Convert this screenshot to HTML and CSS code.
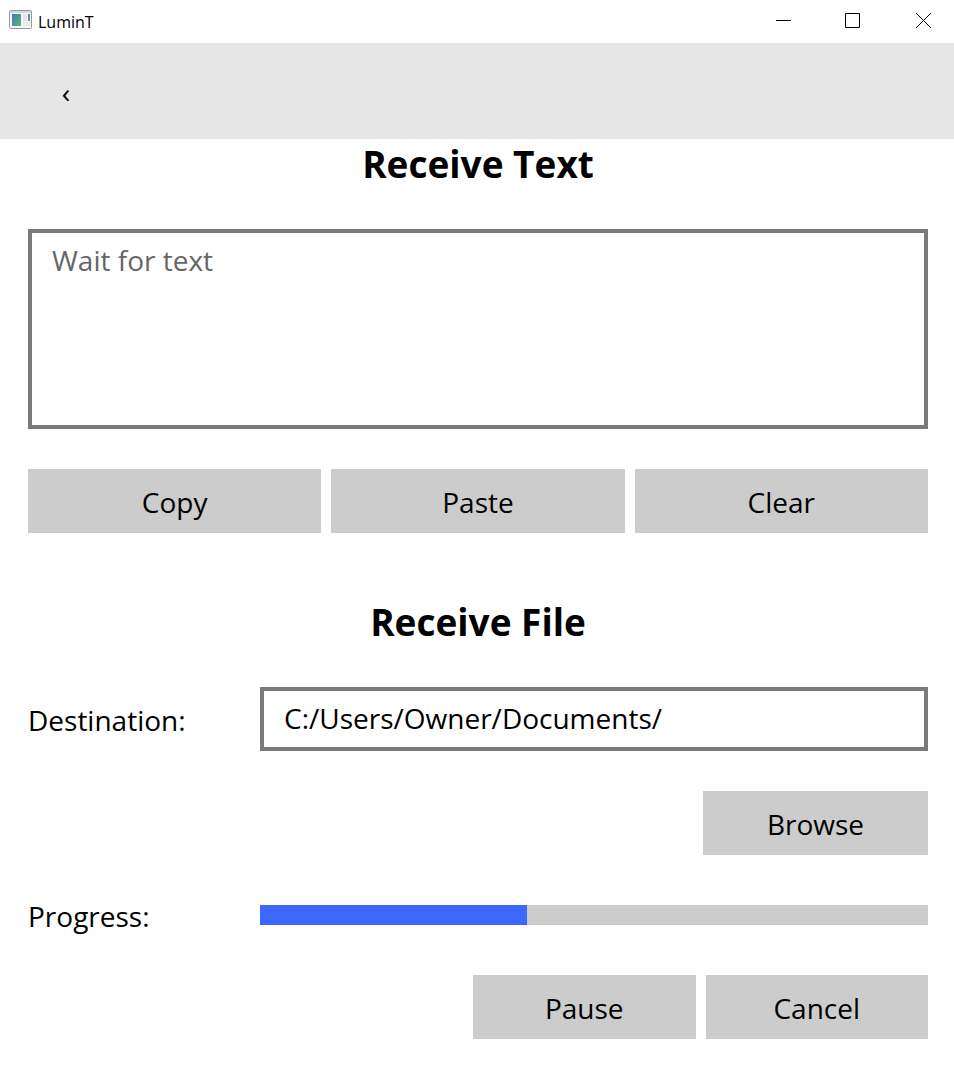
FILE: index.html
```html
<!DOCTYPE html>
<html lang="en">
<head>
<meta charset="utf-8">
<title>LuminT</title>
<link rel="stylesheet" href="styles.css">
</head>
<body>
<header class="titlebar">
  <svg class="app-icon" viewBox="0 0 23 19" aria-hidden="true">
    <defs>
      <linearGradient id="screen" x1="0" y1="0" x2="1" y2="1">
        <stop offset="0" stop-color="#4378ad"/>
        <stop offset="1" stop-color="#5cb877"/>
      </linearGradient>
    </defs>
    <rect x=".5" y=".5" width="22" height="18" rx="1" fill="#f8f8f8" stroke="#93979d"/>
    <rect x="1" y="1" width="21" height="2" fill="#d4d7dc"/>
    <rect x="3" y="4" width="9" height="12" fill="url(#screen)"/>
    <rect x="14" y="4" width="4" height="7" fill="#e2e4e6"/>
    <rect x="14" y="12" width="7" height="4" fill="#e9eaeb"/>
    <rect x="19" y="4" width="2" height="7" fill="url(#screen)"/>
  </svg>
  <span class="app-name">LuminT</span>
  <div class="window-controls">
    <button class="window-button" aria-label="Minimize"><svg viewBox="0 0 16 16"><path d="M1 7.5H16"/></svg></button>
    <button class="window-button" aria-label="Maximize"><svg viewBox="0 0 16 16"><path d="M.5 .5H14.5V14.5H.5Z"/></svg></button>
    <button class="window-button" aria-label="Close"><svg viewBox="0 0 16 16"><path d="M1 0L16 15M16 0L1 15"/></svg></button>
  </div>
</header>
<nav class="toolbar">
  <button class="back" aria-label="Back">‹</button>
</nav>
<main class="content">
  <section class="section">
    <h1 class="heading">Receive Text</h1>
    <textarea class="field message" placeholder="Wait for text" aria-label="Received text"></textarea>
    <div class="actions">
      <button class="button">Copy</button>
      <button class="button">Paste</button>
      <button class="button">Clear</button>
    </div>
  </section>
  <section class="section">
    <h2 class="heading">Receive File</h2>
    <div class="row">
      <label class="label" for="destination">Destination:</label>
      <input class="field path" id="destination" type="text" value="C:/Users/Owner/Documents/">
    </div>
    <div class="browse-row">
      <button class="button browse">Browse</button>
    </div>
    <div class="row progress-row">
      <label class="label" for="progress">Progress:</label>
      <progress class="progress" id="progress" value="40" max="100"></progress>
    </div>
    <div class="transfer-actions">
      <button class="button">Pause</button>
      <button class="button">Cancel</button>
    </div>
  </section>
</main>
</body>
</html>
```
FILE: styles.css
```css
* {
  box-sizing: border-box;
}

body {
  margin: 0;
  background: #fff;
  color: #000;
  font: 28px/38px "Open Sans", "Noto Sans", sans-serif;
}

button,
input,
textarea {
  font: inherit;
  color: inherit;
  border-radius: 0;
}

button {
  border: 0;
  padding: 0;
}

.titlebar {
  display: flex;
  align-items: center;
  height: 43px;
  padding-left: 9px;
}

.app-icon {
  width: 23px;
  height: 19px;
  margin-bottom: 4px;
}

.app-name {
  margin-left: 6px;
  font-size: 16px;
  line-height: 24px;
}

.window-controls {
  display: flex;
  margin-left: auto;
}

.window-button {
  display: flex;
  align-items: center;
  justify-content: center;
  width: 70px;
  height: 43px;
  padding: 0 0 2px 8px;
  background: transparent;
}

.window-button svg {
  width: 16px;
  height: 16px;
  fill: none;
  stroke: #000;
}

.toolbar {
  height: 96px;
  padding: 16px 28px;
  background: #e6e6e6;
}

.back {
  width: 76px;
  height: 64px;
  padding-top: 2px;
  background: transparent;
}

.content {
  padding: 0 26px 26px 28px;
}

.section + .section {
  margin-top: 64px;
}

.heading {
  margin: 0;
  padding-bottom: 40px;
  font-size: 37px;
  line-height: 50px;
  text-align: center;
}

.field {
  display: block;
  border: 4px solid #7a7a7a;
  background: #fff;
  outline: 0;
}

.message {
  width: 100%;
  height: 200px;
  padding: 8px 20px;
  resize: none;
}

.message::placeholder {
  color: #666;
  opacity: 1;
}

.button {
  height: 64px;
  padding-top: 2px;
  background: #ccc;
}

.actions {
  display: grid;
  grid-template-columns: repeat(3, 1fr);
  gap: 10px;
  margin-top: 40px;
}

.row {
  display: grid;
  grid-template-columns: 222px 1fr;
  column-gap: 10px;
  align-items: center;
}

.label {
  padding-top: 2px;
}

.path {
  width: 100%;
  height: 64px;
  padding: 0 20px 2px;
}

.browse-row {
  display: flex;
  justify-content: flex-end;
  margin-top: 40px;
}

.browse {
  width: 25%;
}

.progress-row {
  margin-top: 40px;
}

.progress {
  width: 100%;
  height: 20px;
  appearance: none;
  border: 0;
  background: #ccc;
}

.progress::-webkit-progress-bar {
  background: #ccc;
}

.progress::-webkit-progress-value {
  background: #3d68ff;
}

.transfer-actions {
  display: grid;
  grid-template-columns: 1fr 1fr;
  gap: 10px;
  width: calc(50% + 5px);
  margin: 40px 0 0 auto;
}
```
